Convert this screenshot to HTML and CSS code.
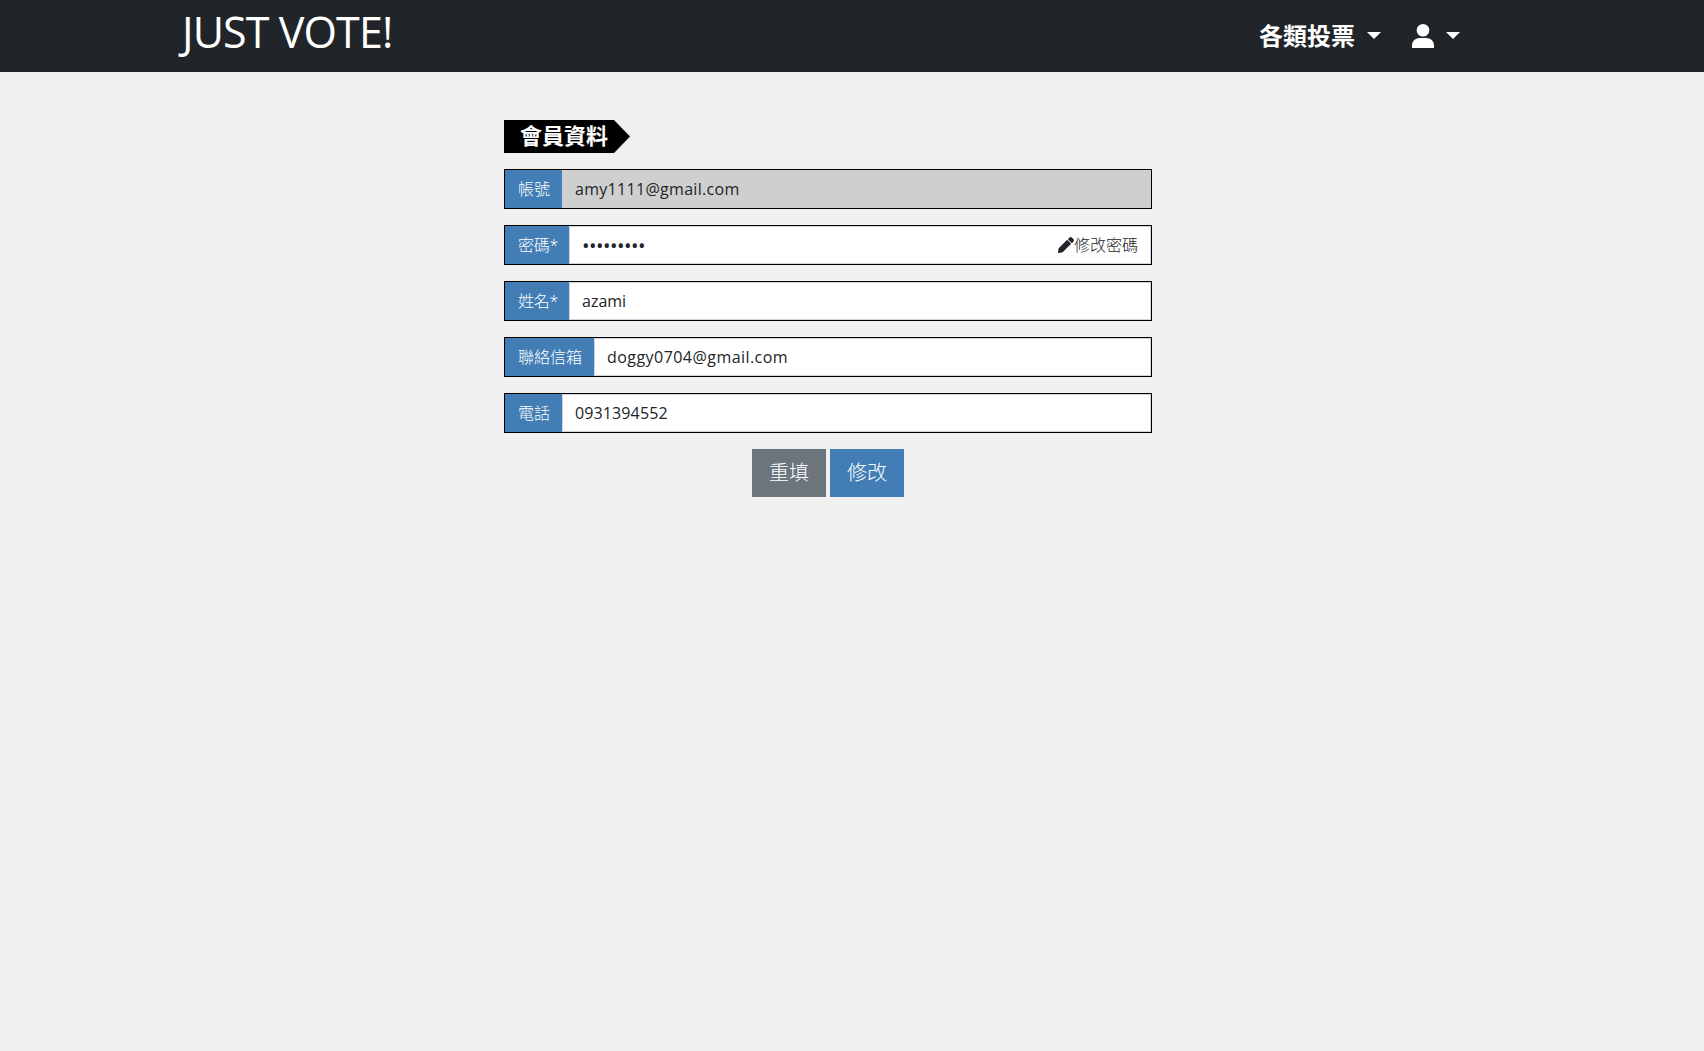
FILE: index.html
```html
<!DOCTYPE html>
<html lang="zh-Hant">
<head>
<meta charset="utf-8">
<title>JUST VOTE!</title>
<link rel="stylesheet" href="styles.css">
</head>
<body>
<header class="navbar">
  <a class="brand">JUST VOTE!</a>
  <nav class="menu">
    <a class="menu-item"><span class="menu-text">各類投票</span><span class="caret"></span></a>
    <a class="menu-item user">
      <svg class="user-icon" viewBox="0 0 22 24" width="22" height="24"><circle cx="11" cy="6.3" r="6.3" fill="#fff"/><path d="M0 24V21.5C0 17 3.400 14 8 14h6c4.600 0 8 3 8 7.500V24z" fill="#fff"/></svg>
      <span class="caret"></span>
    </a>
  </nav>
</header>
<main class="member">
  <h1 class="heading"><span class="heading-text">會員資料</span></h1>
  <form class="form">
    <div class="row disabled"><label class="label two">帳號</label><input class="field account" value="amy1111@gmail.com" readonly></div>
    <div class="row"><label class="label star">密碼*</label><span class="field password">•••••••••</span>
      <a class="change"><svg class="pencil" viewBox="0 0 512 512" width="16" height="16"><path fill="#212529" d="M498 142l-46 46c-5 5-12 5-17 0L324 77c-5-5-5-12 0-17l46-46c19-19 49-19 68 0l60 60c19 19 19 49 0 68zM285 99L22 362 0 484c-3 16 12 30 28 28l122-22 263-263c5-5 5-12 0-17L302 99c-5-5-12-5-17 0z"/></svg>修改密碼</a></div>
    <div class="row"><label class="label star">姓名*</label><input class="field" value="azami"></div>
    <div class="row"><label class="label four">聯絡信箱</label><input class="field email" value="doggy0704@gmail.com"></div>
    <div class="row"><label class="label two">電話</label><input class="field phone" value="0931394552"></div>
    <div class="buttons"><button class="btn reset" type="button">重填</button><button class="btn" type="button">修改</button></div>
  </form>
</main>
</body>
</html>
```
FILE: styles.css
```css
* { box-sizing: border-box; }
body {
  margin: 0;
  min-height: 100vh;
  background: #f0f0f0;
  color: #212529;
  font: 16px/24px "Open Sans", "Noto Sans CJK TC", sans-serif;
}
.navbar {
  display: flex;
  justify-content: space-between;
  height: 72px;
  padding: 0 244px 0 182px;
  background: #212529;
  color: #fff;
}
.brand { font-size: 43px; line-height: 63px; letter-spacing: -0.9px; white-space: nowrap; }
.menu { display: flex; align-items: center; gap: 31px; padding-bottom: 1px; }
.menu-item { display: flex; align-items: center; gap: 12px; }
.menu-text { font-size: 24px; font-weight: 700; line-height: 36px; }
.user-icon { display: block; }
.caret { border: 7px solid transparent; border-top-color: #fff; border-bottom: 0; }
.member { width: 648px; margin: 48px 0 0 504px; }
.heading {
  width: 126px;
  height: 33px;
  margin: 0 0 16px;
  padding-left: 16px;
  background: #000;
  clip-path: polygon(0 0, 110px 0, 100% 50%, 110px 100%, 0 100%);
  color: #fff;
  font-size: 22px;
  font-weight: 700;
  line-height: 31px;
}
.form { display: flex; flex-direction: column; gap: 16px; }
.row { display: flex; height: 40px; border: 1px solid #000; background: #fff; }
.label { flex: none; padding: 7px 0 7px 13px; background: #427eb5; color: #fff; font-weight: 300; white-space: nowrap; }
.two { width: 57px; }
.star { width: 64px; letter-spacing: -0.2px; }
.four { width: 89px; }
.field {
  flex: 1;
  min-width: 0;
  padding: 0 12px;
  border: 1px solid #ced4da;
  border-radius: 0;
  outline: 0;
  background: #fff;
  color: #212529;
  font: inherit;
}
.account { letter-spacing: 0.3px; }
.email { letter-spacing: 0.45px; }
.phone { letter-spacing: 0.12px; }
.disabled .field { border-color: #cfcfcf; background: #cfcfcf; }
.password { border-right: 0; font-size: 20px; line-height: 37px; letter-spacing: -0.53px; }
.change {
  display: flex;
  align-items: center;
  padding-right: 12px;
  border: 1px solid #ced4da;
  border-left: 0;
  font-weight: 300;
}
.pencil { margin-right: 0; }
.buttons { display: flex; justify-content: center; gap: 4px; }
.btn {
  width: 74px;
  height: 48px;
  padding: 0;
  border: 0;
  background: #427eb5;
  color: #fff;
  font: 300 20px/30px "Open Sans", "Noto Sans CJK TC", sans-serif;
}
.reset { background: #6c757d; }
```
